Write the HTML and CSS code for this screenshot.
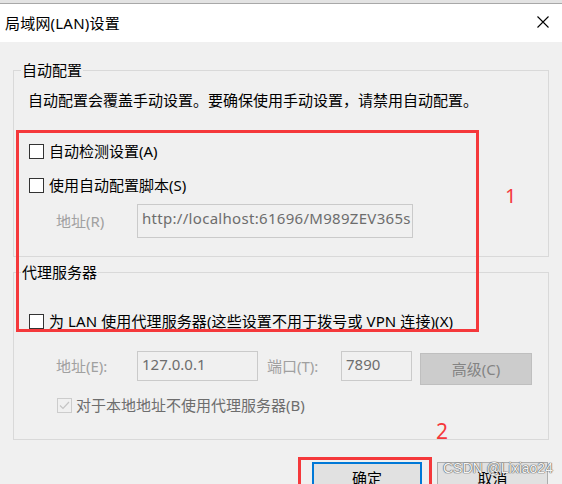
FILE: index.html
```html
<!DOCTYPE html>
<html lang="zh-CN">
<head>
<meta charset="utf-8">
<title>局域网(LAN)设置</title>
<link rel="stylesheet" href="styles.css">
</head>
<body>
<div class="window">
  <div class="topstrip"></div>
  <div class="titlebar">
    <span class="title">局域网(LAN)设置</span>
    <svg class="close" width="12" height="12" viewBox="0 0 12 12"><path d="M0.5 0.5 L11.5 11.5 M11.5 0.5 L0.5 11.5" stroke="#000" stroke-width="1.1" fill="none"/></svg>
  </div>
  <div class="content">
    <div class="group g1">
      <span class="legend">自动配置</span>
      <p class="desc">自动配置会覆盖手动设置。要确保使用手动设置，请禁用自动配置。</p>
      <div class="check-row cr1"><span class="cb"></span><span class="cb-label">自动检测设置(A)</span></div>
      <div class="check-row cr2"><span class="cb"></span><span class="cb-label">使用自动配置脚本(S)</span></div>
      <div class="field-row fr1">
        <span class="lbl lbl-r">地址(R)</span>
        <div class="input input-url">http://localhost:61696/M989ZEV365s</div>
      </div>
    </div>
    <div class="group g2">
      <span class="legend">代理服务器</span>
      <div class="check-row cr3"><span class="cb"></span><span class="cb-label">为 LAN 使用代理服务器(这些设置不用于拨号或 VPN 连接)(X)</span></div>
      <div class="field-row fr2">
        <span class="lbl lbl-e">地址(E):</span>
        <div class="input input-addr">127.0.0.1</div>
        <span class="lbl lbl-t">端口(T):</span>
        <div class="input input-port">7890</div>
        <div class="btn-adv">高级(C)</div>
      </div>
      <div class="check-row cr4">
        <span class="cb cb-dis"><svg width="13" height="13" viewBox="0 0 13 13"><path d="M2 6.5 L5 9.5 L11 3" stroke="#c4c4c4" stroke-width="1.2" fill="none"/></svg></span>
        <span class="cb-label dis">对于本地地址不使用代理服务器(B)</span>
      </div>
    </div>
    <div class="buttons">
      <div class="btn btn-ok">确定</div>
      <div class="btn btn-cancel">取消</div>
    </div>
  </div>
  <div class="mark mark-box1"></div>
  <div class="mark mark-box2"></div>
  <span class="mark-num num1">1</span>
  <span class="mark-num num2">2</span>
  <span class="watermark">CSDN @Lixiao24</span>
</div>
</body>
</html>
```
FILE: styles.css
```css
* { box-sizing: border-box; }
html, body { margin: 0; padding: 0; }
body {
  width: 562px;
  height: 484px;
  overflow: hidden;
  background: #f0f0f0;
  font-family: "Noto Sans", "Noto Sans CJK SC", sans-serif;
  font-size: 15px;
  line-height: 20px;
  color: #000;
}
.window {
  position: relative;
  width: 562px;
  height: 484px;
  overflow: hidden;
}
.topstrip {
  height: 4px;
  background: #e3e3e3;
  border-bottom: 1px solid #a8a8a8;
}
.titlebar {
  height: 38px;
  background: #fff;
  display: flex;
  align-items: center;
  justify-content: space-between;
  padding: 0 13px 0 5px;
}
.title { font-size: 15px; letter-spacing: 0.2px; }
.close { display: block; margin-top: -2px; }

.content { display: flex; flex-direction: column; }

.group {
  position: relative;
  margin-left: 13px;
  width: 536px;
  border: 1px solid #d9d9d9;
  display: flex;
  flex-direction: column;
  align-items: flex-start;
}
.g1 { margin-top: 28px; height: 187px; }
.g2 { margin-top: 15px; height: 168px; }
.legend {
  position: absolute;
  top: -11px;
  left: 7px;
  padding: 0 1px;
  background: #f0f0f0;
  line-height: 20px;
}
.desc { margin: 19px 0 0 14px; line-height: 20px; }

.check-row { display: flex; align-items: center; height: 20px; }
.cb {
  width: 15px; height: 15px;
  border: 1px solid #333;
  background: #fff;
  display: block;
  flex: none;
}
.cb-label { margin-left: 5px; }
.cr1 { margin: 31px 0 0 15px; }
.cr2 { margin: 14px 0 0 15px; }
.cr3 { margin: 38px 0 0 15px; }
.cr4 { margin: 10px 0 0 43px; }
.cr3 .cb-label { letter-spacing: 0.1px; }
.cb-dis {
  border-color: #cccccc;
  background: #f0f0f0;
  padding: 0;
}
.cb-dis svg { display: block; }
.cr4 .cb-label { margin-left: 4px; }
.dis { color: #6d6d6d; }

.field-row { display: flex; align-items: flex-start; }
.fr1 { margin: 9px 0 0 42px; }
.fr2 { margin: 20px 0 0 42px; }
.lbl { color: #a0a0a0; line-height: 30px; }
.lbl-r { width: 81px; line-height: 34px; }
.lbl-e { width: 81px; }
.lbl-t { margin-left: 9px; width: 74px; }
.input {
  border: 1px solid #cacaca;
  background: #f0f0f0;
  color: #6d6d6d;
  padding: 3px 4px;
  line-height: 20px;
  white-space: nowrap;
  overflow: hidden;
}
.input-url { width: 276px; height: 34px; padding-top: 3px; letter-spacing: 0.3px; }
.input-addr { width: 121px; height: 30px; padding-top: 2px; }
.input-port { width: 71px; height: 30px; padding-top: 2px; }
.btn-adv {
  margin: 2px 0 0 8px;
  width: 112px; height: 32px;
  background: #cccccc;
  border: 1px solid #bfbfbf;
  color: #838383;
  display: flex; align-items: center; justify-content: center;
}

.buttons {
  display: flex;
  justify-content: flex-end;
  gap: 15px;
  padding-right: 14px;
  margin-top: 22px;
}
.btn {
  height: 32px;
  background: #e1e1e1;
  border: 1px solid #adadad;
  display: flex; align-items: center; justify-content: center;
}
.btn-ok { width: 110px; border: 2px solid #0078d7; }
.btn-cancel { width: 111px; }

.mark {
  position: absolute;
  border: 3px solid #f5383b;
}
.mark-box1 { left: 16px; top: 130px; width: 463px; height: 202px; }
.mark-box2 { left: 298px; top: 457px; width: 134px; height: 60px; }
.mark-num {
  position: absolute;
  color: #f5383b;
  font-family: "Noto Sans", sans-serif;
  line-height: 24px;
}
.num1 { left: 505px; top: 184px; font-size: 20px; }
.num2 { left: 436px; top: 419px; font-size: 21px; }
.watermark {
  position: absolute;
  left: 443px;
  top: 459px;
  font-family: "Liberation Sans", sans-serif;
  font-size: 14px;
  line-height: 18px;
  color: #f4f4f4;
  text-shadow: 0 0 1px #555, 0 0 1px #555, 0 0 1px #777;
}
```
